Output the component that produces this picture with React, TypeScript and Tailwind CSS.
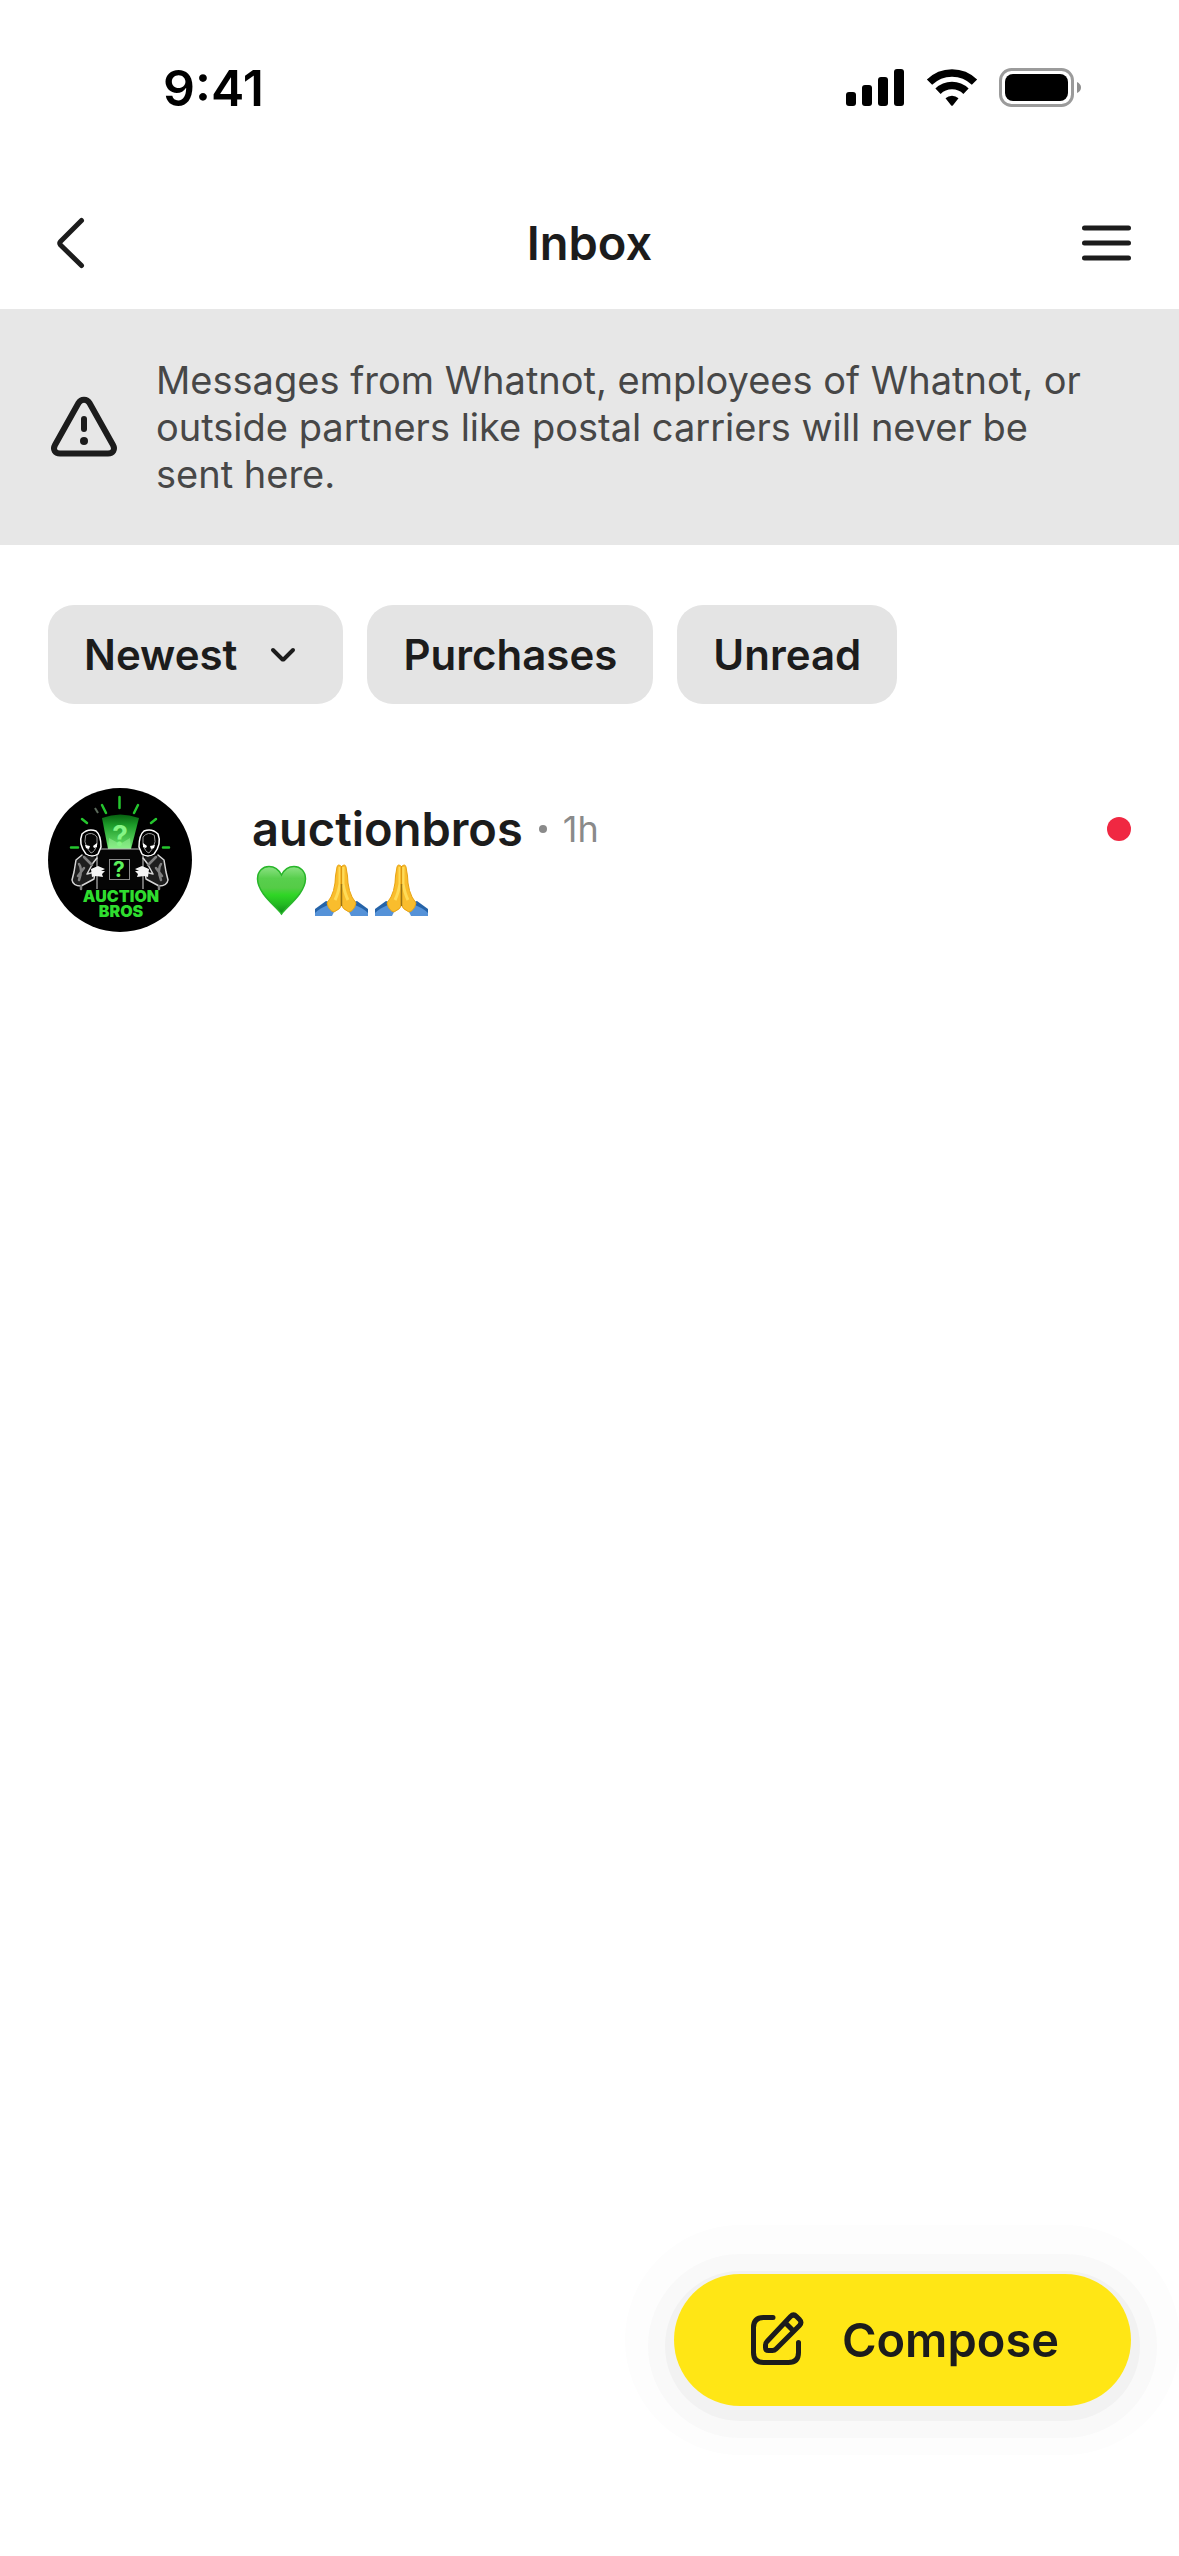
import React, { useState } from "react";

const StatusIcons = () => (
  <svg
    width="236"
    height="40"
    viewBox="0 0 236 40"
    role="img"
    aria-label="Signal, Wi-Fi and battery"
  >
    <rect x="0" y="24" width="10" height="14" rx="3" />
    <rect x="16" y="17" width="10" height="21" rx="3" />
    <rect x="32" y="9" width="10" height="29" rx="3" />
    <rect x="48" y="1" width="10" height="37" rx="3" />
    <g fill="none" stroke="#000" strokeWidth="7.5">
      <path d="M83.500 14.200A32 32 0 0 1 128.500 14.200" />
      <path d="M92 23.300A20 20 0 0 1 120 23.300" />
    </g>
    <path d="M99.500 30.200A9.500 9.500 0 0 1 112.500 30.200L107 37.200Q106 38.500 105 37.200Z" />
    <rect
      x="154.500"
      y="1.500"
      width="72"
      height="36"
      rx="11"
      fill="none"
      stroke="#9b9b9b"
      strokeWidth="3"
    />
    <rect x="159" y="6" width="63" height="27" rx="8" />
    <path d="M231 14Q235 16 235 19.500T231 25Z" fill="#8f8f8f" />
  </svg>
);

const WarningIcon = () => (
  <svg
    width="72"
    height="72"
    viewBox="0 1 72 72"
    fill="none"
    stroke="#1c1c1c"
    strokeWidth="6"
    strokeLinecap="round"
    strokeLinejoin="round"
    className="shrink-0"
  >
    <path d="M30.500 12C33 7.500 39 7.500 41.500 12L65 54C67.500 58.500 65 62.500 60 62.500H12C7 62.500 4.500 58.500 7 54Z" />
    <path d="M36 28V38" />
    <circle cx="36" cy="50" r="4" fill="#1c1c1c" stroke="none" />
  </svg>
);

const ComposeIcon = () => (
  <svg
    width="60"
    height="60"
    viewBox="0 0 60 60"
    fill="none"
    stroke="#1c1c1c"
    strokeWidth="5"
    strokeLinecap="round"
    strokeLinejoin="round"
  >
    <path d="M27 7.500H17.500Q7.500 7.500 7.500 17.500V42.500Q7.500 52.500 17.500 52.500H42.500Q52.500 52.500 52.500 42.500V32.500" />
    <path d="M21 31.500L44.500 6.500Q47.500 3.500 50.500 6.500L53.500 9.500Q56.500 12.500 53.500 15.500L30 39Q28.500 40.500 26.500 40.500H22.500Q19.500 40.500 19.500 37.500V35Q19.500 33 21 31.500Z" />
    <path d="M39.500 13L47 20.500" />
  </svg>
);

// One hooded figure, used mirrored for the right side of the logo
const Bro = () => (
  <g strokeLinejoin="round" strokeLinecap="round">
    <path
      d="M34 46Q40 40 48 43Q53 47 53 59L50 66Q44 70 38 66Q30 56 34 46Z"
      fill="#000"
      stroke="#fff"
      strokeWidth="1.500"
    />
    <path
      d="M38 47Q44 43 49 49V56Q47 64 43 65Q38 61 37 54Z"
      fill="#050505"
      stroke="#999"
      strokeWidth="1"
    />
    <path d="M37 57L42 58L41 61L38 60ZM45 58L49 55L49 59L46 60Z" fill="#fff" />
    <path
      d="M34 67L28 72L26 84L24 92Q25 98 33 98L46 91L47 84L39 86L45 75L49 70"
      fill="#1d1d1d"
      stroke="#d6d6d6"
      strokeWidth="1.500"
    />
    <path
      d="M31 76Q35 81 31 92M36 69L44 77M36 80L30 88M33 98V101"
      stroke="#808080"
      strokeWidth="2.500"
      fill="none"
    />
    <path d="M43 81L50 78L57 81L53 83H57L54 86L55 89L48 88L44 89Z" fill="#f4f4f4" />
  </g>
);

const Avatar = () => (
  <svg
    width="144"
    height="144"
    viewBox="0 0 144 144"
    role="img"
    aria-label="Auction Bros"
    className="shrink-0 rounded-full"
  >
    <defs>
      <linearGradient id="beam" x1="0" y1="0" x2="0" y2="1">
        <stop offset="0" stopColor="#075f10" />
        <stop offset="0.300" stopColor="#1c9a28" />
        <stop offset="1" stopColor="#6fe670" />
      </linearGradient>
    </defs>
    <rect width="144" height="144" fill="#000" />
    <g stroke="#25c52e" strokeWidth="2.500" strokeLinecap="round">
      <path d="M71.500 9V20M54 17L58 25M90 17L86 25M34 31L39 35M108 31L103 35M23 59.500H30M115 59.500H121" />
    </g>
    <path d="M47 20L50 25" stroke="#5c6b5c" strokeWidth="2" />
    <path d="M54 30Q72 23 91 30L83 61H60Z" fill="url(#beam)" />
    <path d="M61 50L72 56L82 50L83 61H60Z" fill="#b6ffb0" opacity="0.400" />
    <rect x="49" y="61" width="46" height="40" fill="#050505" />
    <path
      d="M49 101V61H95V101"
      fill="none"
      stroke="#b5b5b5"
      strokeWidth="1.200"
    />
    <rect
      x="61.500"
      y="71.500"
      width="20"
      height="20"
      fill="#000"
      stroke="#8a8a8a"
    />
    <Bro />
    <g transform="matrix(-1 0 0 1 144 0)">
      <Bro />
    </g>
    <g
      fill="#2fdd2f"
      textAnchor="middle"
      fontFamily="Inter, Liberation Sans, sans-serif"
      fontWeight="900"
    >
      <text x="72" y="58" fontSize="28" fontWeight="700" fill="#86f586">
        ?
      </text>
      <text x="71" y="89" fontSize="21" fontWeight="700" fill="#5bf05b">
        ?
      </text>
      <text x="73" y="114" fontSize="16">
        AUCTION
      </text>
      <text x="73" y="129" fontSize="16">
        BROS
      </text>
    </g>
  </svg>
);

const GreenHeart = () => (
  <svg width="60" height="60" viewBox="-2 -2 60 60" role="img" aria-label="💚">
    <defs>
      <linearGradient id="heart" x1="0" y1="0" x2="0" y2="1">
        <stop offset="0" stopColor="#8de285" />
        <stop offset="0.250" stopColor="#58cf4d" />
        <stop offset="0.450" stopColor="#55cc47" />
        <stop offset="0.600" stopColor="#2fd625" />
        <stop offset="0.800" stopColor="#23b922" />
        <stop offset="1" stopColor="#0f8a18" />
      </linearGradient>
    </defs>
    <path
      d="M27.500 54C22 46 4 34 3.500 19C3.500 11 9 6.500 15 6.500C21 6.500 25 10 27.500 15C30 10 34 6.500 40 6.500C46 6.500 51.500 11 51.500 19C51 34 33 46 27.500 54Z"
      fill="url(#heart)"
      stroke="#28b62a"
      strokeWidth="1.500"
    />
  </svg>
);

// Half of the folded hands: a sleeve, a cuff and one palm
const Hand = () => (
  <g>
    <path d="M1 50L13 41L21 50L18 56H1Z" fill="#5592d8" />
    <path d="M1 49L12 41L16 43L14 45Q6 48 1 53Z" fill="#2563a8" />
    <path
      d="M28 7Q24 3 23 7Q21 17 21 23Q20 31 17 37L13 43Q15 51 20 52Q27 49 28 44Z"
      fill="#f9bd2d"
      stroke="#e8a413"
      strokeWidth="1"
    />
    <path d="M26 7V24Q24 34 21 40" stroke="#ffdb57" strokeWidth="3" fill="none" />
  </g>
);

const FoldedHands = () => (
  <svg width="60" height="60" viewBox="-2 -2 60 60" role="img" aria-label="🙏">
    <Hand />
    <g transform="matrix(-1 0 0 1 55 0)">
      <Hand />
    </g>
    <path d="M27.500 6V25" stroke="#dd9810" strokeWidth="1.200" />
    <path d="M27.500 24V46" stroke="#9b7415" strokeWidth="1.500" />
  </svg>
);

const filters = ["Purchases", "Unread"];

export default function App() {
  const [activeFilter, setActiveFilter] = useState("");

  return (
    <div className="min-h-screen bg-white font-['Inter','Liberation_Sans',sans-serif] text-[#1c1c1c]">
      <div className="flex h-[176px] items-center justify-between pr-[97px] pl-[163px] text-[50px] font-semibold text-black">
        <span>9:41</span>
        <StatusIcons />
      </div>

      <header className="grid h-[133px] grid-cols-3 items-center px-12">
        <button aria-label="Back" className="justify-self-start">
          <svg
            width="60"
            height="60"
            viewBox="0 0 60 60"
            fill="none"
            stroke="#1c1c1c"
            strokeWidth="5"
            strokeLinecap="round"
            strokeLinejoin="round"
          >
            <path d="M33.500 7.500L12.500 28.500Q11 30 12.500 32L33.500 52.500" />
          </svg>
        </button>
        <h1 className="text-center text-[47px] leading-[58px] font-semibold">
          Inbox
        </h1>
        <button aria-label="Menu" className="justify-self-end">
          <svg
            width="50"
            height="60"
            viewBox="0 0 50 60"
            stroke="#1c1c1c"
            strokeWidth="5"
            strokeLinecap="round"
          >
            <path d="M3.500 15H47.500M3.500 30H47.500M3.500 45H47.500" />
          </svg>
        </button>
      </header>

      <section className="flex items-center gap-9 bg-[#e7e7e7] pt-12 pr-[72px] pb-[47px] pl-12">
        <WarningIcon />
        <p className="text-[38px] leading-[47px] text-[#474747]">
          Messages from Whatnot, employees of Whatnot, or outside partners like
          postal carriers will never be sent here.
        </p>
      </section>

      <div className="flex gap-6 px-12 pt-[60px] text-[42px] leading-[51px] font-semibold">
        <button className="flex items-center gap-[22px] rounded-[26px] bg-[#e4e4e4] px-9 py-6">
          Newest
          <svg
            width="48"
            height="48"
            viewBox="0 0 48 48"
            fill="none"
            stroke="#1c1c1c"
            strokeWidth="4"
            strokeLinecap="round"
            strokeLinejoin="round"
          >
            <path d="M14 19L23 28Q24 29 25 28L34 19" />
          </svg>
        </button>
        {filters.map((filter) => (
          <button
            key={filter}
            aria-pressed={activeFilter === filter}
            onClick={() =>
              setActiveFilter(activeFilter === filter ? "" : filter)
            }
            className="rounded-[26px] bg-[#e4e4e4] px-9 py-6"
          >
            {filter}
          </button>
        ))}
      </div>

      <a href="#auctionbros" className="flex gap-[60px] px-12 pt-[84px]">
        <Avatar />
        <div className="grow pt-3">
          <div className="flex items-center gap-4">
            <span className="text-[47px] leading-[58px] font-semibold">
              auctionbros
            </span>
            <span className="size-2 rounded-full bg-[#8a8a8a]" />
            <span className="text-[36px] leading-[44px] text-[#8a8a8a]">
              1h
            </span>
            <span className="ml-auto size-6 rounded-full bg-[#f02842]" />
          </div>
          <div className="flex">
            <GreenHeart />
            <FoldedHands />
            <FoldedHands />
          </div>
        </div>
      </a>

      <button className="fixed right-12 bottom-[150px] flex h-[132px] items-center gap-9 rounded-full bg-[#ffe615] px-[72px] text-[47px] font-semibold shadow-[0_6px_0_9px_#f2f2f2,0_6px_0_26px_#f9f9f9,0_0_0_49px_#fdfdfd]">
        <ComposeIcon />
        Compose
      </button>
    </div>
  );
}
